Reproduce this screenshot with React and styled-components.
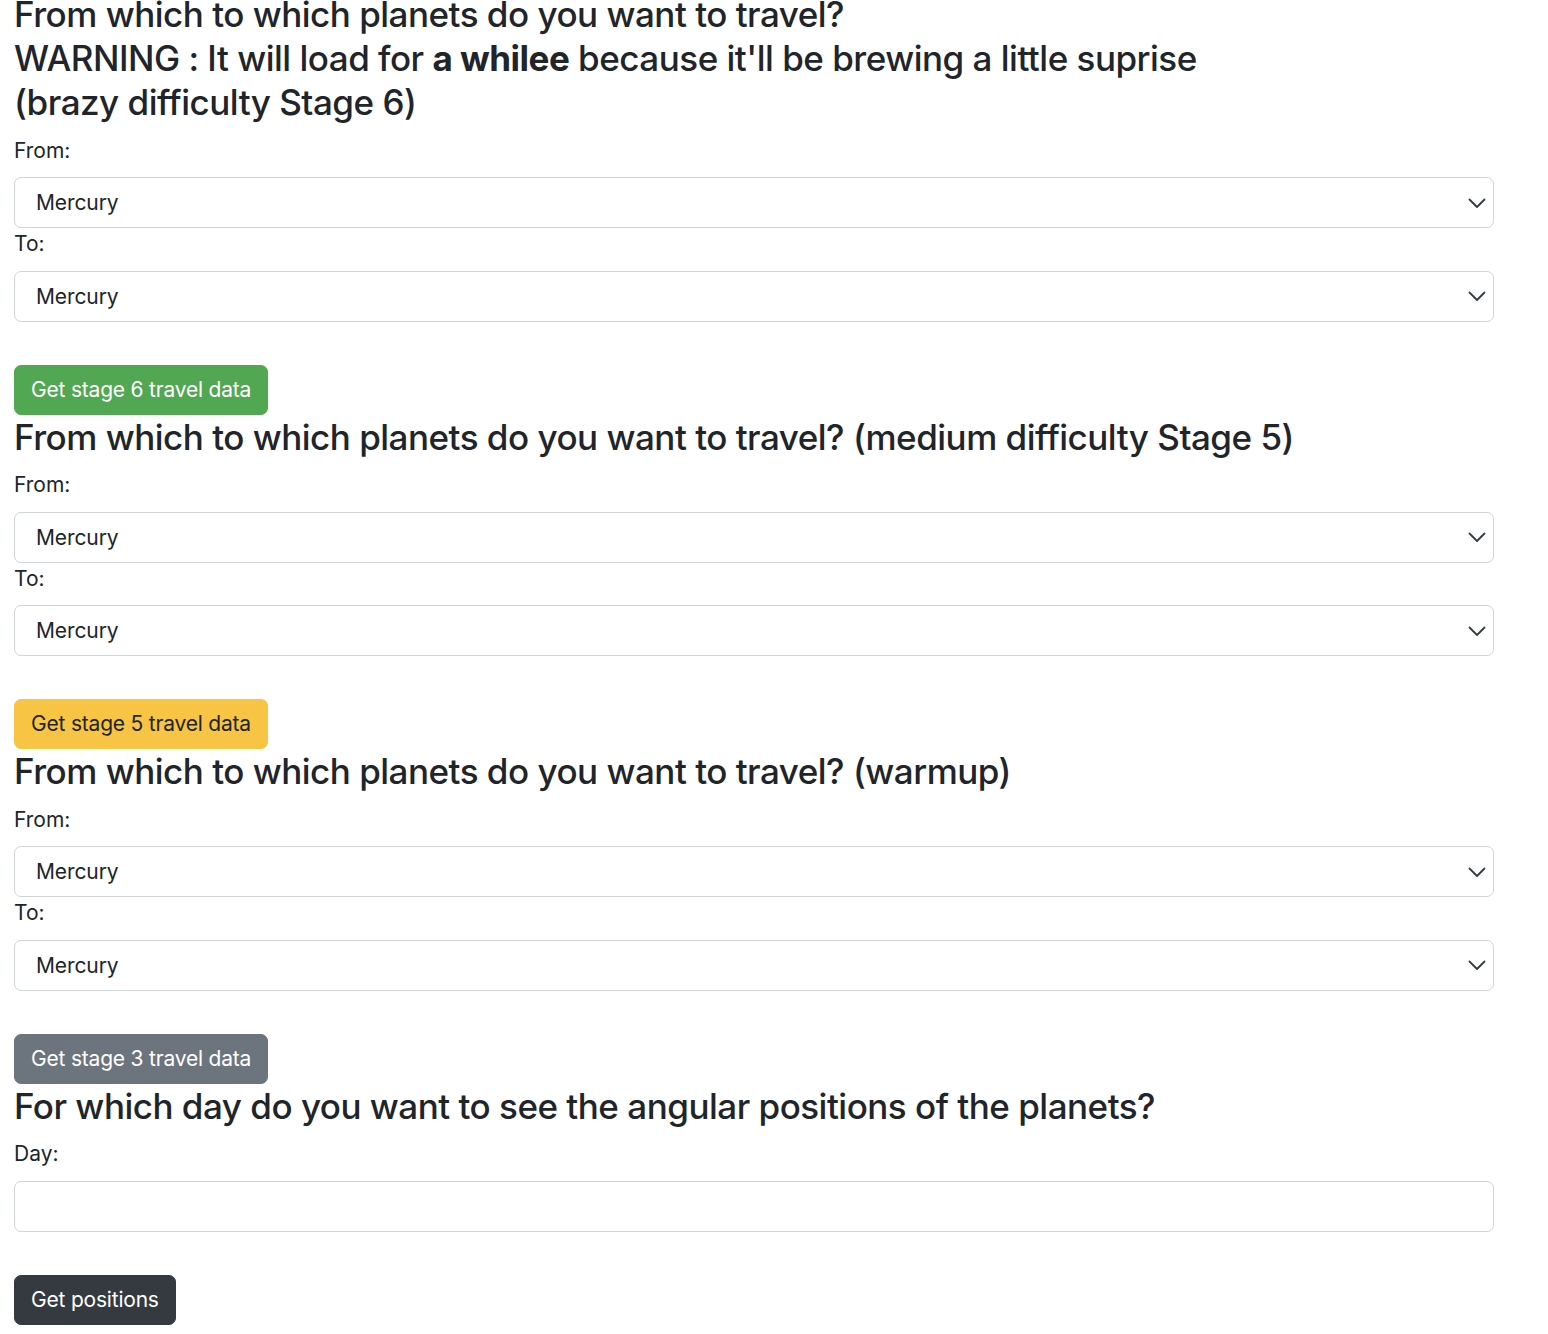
import React from 'react'
import styled, { createGlobalStyle } from 'styled-components'

const GlobalStyle = createGlobalStyle`
  html, body {
    margin: 0;
    padding: 0;
    background: #fff;
  }
  body {
    font-family: Inter, "Noto Sans", "Liberation Sans", sans-serif;
    color: #212529;
    font-size: 21px;
    line-height: 1.5;
    overflow: hidden;
  }
  * {
    box-sizing: border-box;
  }
`

const Page = styled.div`
  padding: 0 14px;
  margin-top: -8px;
  width: 1508px;
`

const Heading = styled.h3`
  margin: 0 0 10.5px;
  font-size: 35px;
  font-weight: 500;
  line-height: 44px;
  letter-spacing: -0.5px;

  b {
    font-weight: 700;
  }
`

const Label = styled.label`
  display: block;
  margin-bottom: 11px;
  font-size: 21px;
  line-height: 1.5;
`

const SelectWrap = styled.div`
  position: relative;
  width: 1480px;
`

const Select = styled.select`
  display: block;
  width: 100%;
  height: 51px;
  padding: 0 50px 0 21px;
  font-family: inherit;
  font-size: 21px;
  letter-spacing: -0.1px;
  color: #212529;
  background: #fff;
  border: 1px solid #ced4da;
  border-radius: 7px;
  appearance: none;
  -webkit-appearance: none;
  outline: none;
`

const Chevron = styled.svg`
  position: absolute;
  right: 8px;
  top: 50%;
  width: 18px;
  height: 11px;
  margin-top: -5px;
  pointer-events: none;
`

const Input = styled.input`
  display: block;
  width: 1480px;
  height: 51px;
  padding: 0 21px;
  font-family: inherit;
  font-size: 21px;
  border: 1px solid #ced4da;
  border-radius: 7px;
  outline: none;
`

const Button = styled.button`
  display: inline-block;
  margin-top: ${p => p.$gap || 43}px;
  height: 50px;
  padding: 0 16px;
  font-family: inherit;
  font-size: 21px;
  letter-spacing: -0.2px;
  line-height: 1.5;
  border: 1px solid ${p => p.$bg};
  border-radius: 7px;
  background: ${p => p.$bg};
  color: ${p => p.$fg || '#fff'};
  cursor: pointer;
`

const ButtonRow = styled.div`
  display: block;
  line-height: 0;
`

const planets = ['Mercury', 'Venus', 'Earth', 'Mars', 'Jupiter', 'Saturn', 'Uranus', 'Neptune']

const PlanetSelect = () => (
  <SelectWrap>
    <Select defaultValue="Mercury">
      {planets.map(p => (
        <option key={p}>{p}</option>
      ))}
    </Select>
    <Chevron viewBox="0 0 18 11" fill="none">
      <path d="M1.5 1.5 L9 9 L16.5 1.5" stroke="#343a40" strokeWidth="1.8" strokeLinecap="round" strokeLinejoin="round" />
    </Chevron>
  </SelectWrap>
)

const TravelForm = ({ title, button, bg, fg }) => (
  <section>
    <Heading>{title}</Heading>
    <Label>From:</Label>
    <PlanetSelect />
    <Label>To:</Label>
    <PlanetSelect />
    <ButtonRow>
      <Button $bg={bg} $fg={fg}>{button}</Button>
    </ButtonRow>
  </section>
)

const App = () => {
  return (
    <Page>
      <GlobalStyle />
      <TravelForm
        title={
          <>
            From which to which planets do you want to travel?
            <br />
            WARNING : It will load for <b>a whilee</b> because it'll be brewing a little suprise
            <br />
            (brazy difficulty Stage 6)
          </>
        }
        button="Get stage 6 travel data"
        bg="#52a752"
      />
      <TravelForm
        title="From which to which planets do you want to travel? (medium difficulty Stage 5)"
        button="Get stage 5 travel data"
        bg="#f7c444"
        fg="#212529"
      />
      <TravelForm
        title="From which to which planets do you want to travel? (warmup)"
        button="Get stage 3 travel data"
        bg="#6c757d"
      />
      <section>
        <Heading>For which day do you want to see the angular positions of the planets?</Heading>
        <Label>Day:</Label>
        <Input type="text" />
        <ButtonRow>
          <Button $bg="#343a40" $gap={43}>Get positions</Button>
        </ButtonRow>
      </section>
    </Page>
  )
}

export default App
